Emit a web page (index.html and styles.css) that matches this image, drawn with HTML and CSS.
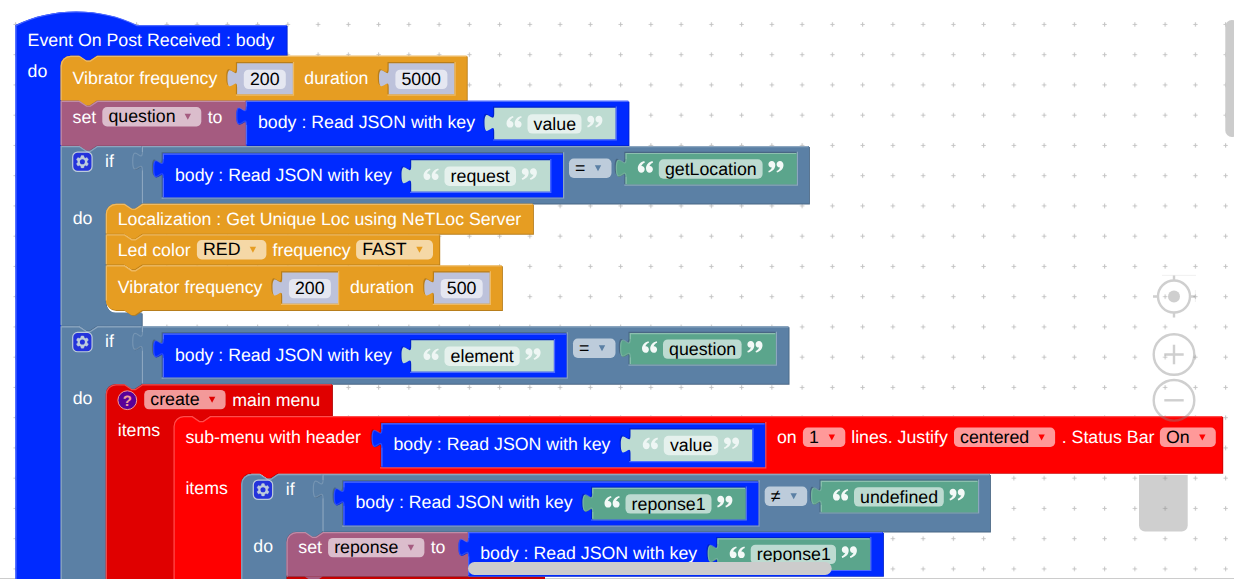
FILE: index.html
```html
<!DOCTYPE html>
<html lang="en">
<head>
<meta charset="utf-8">
<title>Block workspace</title>
<link rel="stylesheet" href="styles.css">
</head>
<body>
<main class="workspace">
  <svg class="canvas" width="1234" height="579" viewBox="0 0 1234 579">
    <defs>
      <pattern id="grid" width="30.25" height="30.25" x="0.45" y="9.3" patternUnits="userSpaceOnUse">
        <path class="grid-mark" d="M13.1 15.1h4.2M15.2 13v4.2"/>
      </pattern>
      <g id="quote">
        <path d="M6.3 0.3C2.400 1.2 -0.200 4.2 -0.200 7.700c0 2.500 1.500 4.200 3.500 4.200 2 0 3.400-1.500 3.400-3.400 0-1.900-1.300-3.200-3-3.200-.2 0-.4 0-.5.1.5-1.600 1.700-2.800 3.600-3.500z"/>
        <path d="M14.500 0.3C10.600 1.2 8 4.200 8 7.700c0 2.500 1.500 4.200 3.500 4.200 2 0 3.400-1.500 3.400-3.400 0-1.900-1.300-3.200-3-3.200-.2 0-.4 0-.5.1.5-1.600 1.700-2.800 3.600-3.500z"/>
      </g>
      <g id="gear">
        <rect class="icon-shape" width="16" height="16" rx="4" ry="4"/>
        <path class="icon-symbol" d="m4.203,7.296 0,1.368 -0.92,0.677 -0.11,0.41 0.9,1.559 0.41,0.11 1.043,-0.457 1.187,0.683 0.127,1.134 0.3,0.3 1.8,0 0.3,-0.299 0.127,-1.138 1.185,-0.682 1.046,0.458 0.409,-0.11 0.9,-1.559 -0.11,-0.41 -0.92,-0.677 0,-1.366 0.92,-0.677 0.11,-0.41 -0.9,-1.559 -0.409,-0.109 -1.046,0.458 -1.185,-0.682 -0.127,-1.138 -0.3,-0.299 -1.8,0 -0.3,0.3 -0.126,1.135 -1.187,0.682 -1.043,-0.457 -0.41,0.11 -0.899,1.559 0.108,0.409z"/>
        <circle class="icon-hole" r="2.1" cx="8" cy="8"/>
      </g>
    </defs>
    <rect class="backdrop" width="1234" height="579"/>
    <rect fill="url(#grid)" width="1234" height="578"/>
    <path class="border-line" d="M0 578.5H1234"/>
    <g id="blocks" transform="translate(-0.5 -0.5)"></g>
    <g class="controls">
      <path d="M1139 475h48.700v50.500a6 6 0 0 1-6 6h-36.700a6 6 0 0 1-6-6z"/>
      <g class="control-lines">
        <circle cx="1174" cy="296.500" r="16"/>
        <path d="M1174 275.500v5M1174 312.500v5M1153 296.500h5M1190 296.500h5"/>
        <circle cx="1174" cy="354.500" r="20.300"/>
        <path d="M1164.300 354.500h19.400M1174 344.800v19.400"/>
        <circle cx="1174" cy="400.300" r="20.300"/>
        <path d="M1164.300 400.300h19.400"/>
      </g>
      <circle cx="1174" cy="296.500" r="6"/>
      <path class="hairline" d="M1162 275.400h34M1195.400 290v12"/>
    </g>
    <rect class="scrollbar" x="468" y="562" width="363.700" height="13" rx="6.500"/>
    <rect class="scrollbar" x="1225.300" y="20" width="13" height="117" rx="6.500"/>
  </svg>
</main>
<script src="workspace.js"></script>
</body>
</html>
```
FILE: styles.css
```css
body {
  margin: 0;
  background: #fff;
}
.workspace {
  display: flex;
  height: 581px;
  overflow: hidden;
}
.canvas {
  display: block;
  flex: none;
  font-family: "Liberation Sans", Arial, sans-serif;
  font-size: 17.75px;
}
.backdrop { fill: #fff; }
.grid-mark { stroke: #c4c4c4; stroke-width: 1.1; }
.border-line { stroke: #ccc; }
.canvas text { text-rendering: geometricPrecision; }
.label { fill: #fff; }
.value { fill: #000; }
.field { fill: #fff; fill-opacity: .6; }
.quotes { fill: #fff; fill-opacity: .93; }
.quotes.dim { fill-opacity: .75; }
.arrow { stroke: none; }
.edge { fill: none; stroke-width: 1.21; }
.edge.tab { opacity: .55; }
.icon { opacity: .6; }
.icon-shape { fill: #00f; stroke: #fff; stroke-width: 1; }
.icon-symbol { fill: #fff; stroke: #fff; stroke-width: .3; }
.icon-hole { fill: #00f; }
.icon-text { fill: #fff; font-size: 15px; font-weight: bold; text-anchor: middle; }
.controls { fill: #888; opacity: .4; }
.control-lines { fill: none; stroke: #888; stroke-width: 2.4; }
.hairline { fill: none; stroke: #888; stroke-width: .5; opacity: .6; }
.scrollbar { fill: #ccc; }
```
FILE: workspace.js
```js
const S = 1.21; // workspace zoom
const layer = document.getElementById('blocks');
const BLUE = '#002aff', ORANGE = '#e69d22', PURPLE = '#a55b80', LOGIC = '#5b80a5',
  GREEN = '#5ba58c', PALE = '#bddbd1', NUM = '#bdc2db', MENU = '#e00000', SUB = '#ff0000';

function blend(color, target, amount) {
  const channels = [1, 3, 5].map(i => parseInt(color.substr(i, 2), 16));
  return 'rgb(' + channels.map(v => Math.round(v + (target - v) * amount)).join(',') + ')';
}
const light = c => blend(c, 255, 0.3);
const dark = c => blend(c, 0, 0.2);

function add(tag, attrs, text) {
  const el = document.createElementNS('http://www.w3.org/2000/svg', tag);
  for (const k in attrs) el.setAttribute(k, attrs[k]);
  if (text !== undefined) el.textContent = text;
  layer.appendChild(el);
  return el;
}

const n = (...v) => v.map(k => k * S).join(' ');
const TAB_UP = `c${n(0, -10, -8, 8, -8, -7.5)}s${n(8, 2.5, 8, -7.5)}`;
const NOTCH = `l${n(6, 4)}l${n(3, 0)}l${n(6, -4)}`;
const NOTCH_BACK = `l${n(-6, 4)}l${n(-3, 0)}l${n(-6, -4)}`;
const R = 8 * S;

function topEdge(x, y, r, o) {
  if (o.hat) return `V${y}c${n(30, -15, 70, -15, 100, 0)}H${r}`;
  const corner = o.round ? `V${y + R}a${R} ${R} 0 0 1 ${R} ${-R}` : `V${y}`;
  return corner + (o.notch ? `H${x + 15 * S}${NOTCH}` : '') + `H${r}`;
}

/* o.arm = {x, y, b, r}: a statement opening below the first row */
function block(x, y, r, b, color, o = {}) {
  let d = o.last ? `M${x + R} ${b}a${R} ${R} 0 0 1 ${-R} ${-R}` : `M${x} ${b}`;
  if (o.tab) d += `V${y + 20 * S}${TAB_UP}`;
  d += topEdge(x, y, r, o);
  if (o.arm) {
    const a = o.arm;
    d += `V${a.y}H${a.x + 30 * S}${NOTCH_BACK}H${a.x + R}a${R} ${R} 0 0 0 ${-R} ${R}` +
      `V${a.b - R}a${R} ${R} 0 0 0 ${R} ${R}H${a.r}`;
  }
  d += `V${b}`;
  if (o.under) d += `H${x + 30 * S}${NOTCH_BACK}`;
  d += 'Z';
  if (!o.shadow) add('path', { d, fill: dark(color), transform: 'translate(.9 .9)' });
  add('path', { d, fill: color });
  if (o.shadow) return;
  let e = `M${x + .6} ${o.last ? b - R : b - .6}`;
  if (o.tab) {
    add('path', { class: 'edge tab', d: `M${x + .6} ${y + 20 * S}${TAB_UP}`, stroke: light(color) });
    e += `V${y + 20 * S}M${x + .6} ${y + 5 * S}`;
  }
  e += o.hat ? `V${y + .6}c${n(30, -15, 70, -15, 100, 0)}H${r - .6}` : topEdge(x + .6, y + .6, r - .6, o);
  add('path', { class: 'edge', d: e, stroke: light(color) });
}

/* a value block sitting in an inline socket of a parent block */
function socket(x, y, r, b, color, parent, o = {}) {
  const hx = x - 1.2, hy = y - 1.2;
  add('path', { d: `M${hx} ${b}V${hy + 20 * S}${TAB_UP}V${hy}H${r}V${b}Z`, fill: dark(parent) });
  block(x, y, r, b, color, { tab: true, ...o });
  add('path', { class: 'edge', d: `M${r + .6} ${hy}V${b + .6}H${hx}`, stroke: light(parent) });
}

const label = (x, y, t) => add('text', { class: 'label', x, y: y + .3 }, t);
function field(x, r, y, t, arrowColor) {
  add('rect', { class: 'field', x, y: y + .2, width: r - x + .3, height: 19.4, rx: 4.8 });
  add('text', { class: 'value', x: x + 6.1, y: y + 15.500 }, t);
  if (arrowColor) {
    add('path', { class: 'arrow', fill: arrowColor, d: `M${r - 16.400} ${y + 7}h6.400l-3.200 6z` });
  }
}
function quotes(x, x2, y, dim) {
  const cls = dim ? 'quotes dim' : 'quotes';
  add('use', { class: cls, href: '#quote', transform: `translate(${x} ${y})` });
  add('use', { class: cls, href: '#quote', transform: `translate(${x2 + 14.900} ${y + 12}) rotate(180)` });
}
function number(x, r, y, t, parent) {
  socket(x, y, r, y + 31.400, NUM, parent, { shadow: true });
  field(x + 6.700, r - 7.400, y + 6.300, t);
}
function string(x, r, y, t, parent, dim) {
  socket(x, y, r, y + 31.600, dim ? PALE : GREEN, parent, { shadow: dim });
  quotes(x + 12.500, r - 28.400, y + 7.900, dim);
  field(x + 33.300, r - 34.500, y + 6.200, t);
}
function readJson(x, r, y, keyX, key, dim) {
  label(x + 12.1, y + 27.300, 'body : Read JSON with key');
  string(keyX, r - 12.800, y + 7, key, BLUE, dim);
}
function gear(x, y) {
  add('use', { class: 'icon', href: '#gear', transform: `translate(${x} ${y}) scale(${S})` });
}

// Event hat block
block(15.900, 25.500, 287.200, 640, BLUE, { hat: true, arm: { x: 61.1, y: 56, b: 620, r: 160 } });
label(28.1, 45.900, 'Event On Post Received : body');
label(28.1, 76.700, 'do');

// Vibrator
block(61.1, 56.200, 467.300, 101, ORANGE, { round: true, notch: true, under: true });
label(73.1, 84, 'Vibrator frequency');
number(237.600, 293.400, 63.700, '200', ORANGE);
label(304.800, 84, 'duration');
number(389.200, 455, 63.700, '5000', ORANGE);

// set question
block(61.1, 101.300, 246.500, 146, PURPLE, { notch: true, under: true });
label(73.1, 123, 'set');
field(102.800, 201.500, 107.300, 'question', PURPLE);
label(208.200, 123, 'to');
block(246.400, 101.300, 629, 145.700, BLUE, { tab: true });
readJson(246.400, 629, 101.300, 494.700, 'value', true);

// an "if" block with its comparison row
function ifBlock(x, y, b, o) {
  block(x, y, x + 81.200, b, LOGIC, { notch: true, round: o.round, under: true,
    arm: { x: x + 45.200, y: y + 57.700, b: o.armBottom, r: x + 81.200 } });
  gear(x + 12.1, y + 6.100);
  label(x + 44.500, y + 20.700, 'if');
  label(x + 12.1, y + 77.700, 'do');
  block(x + 81.200, y, o.right, y + 57.500, LOGIC, { tab: true });
}
function compare(x, y, r, op, opX) {
  socket(x, y, r, y + 44, BLUE, LOGIC);
  field(opX + .300, opX + 42.500, y + 4.800, op, LOGIC);
}

ifBlock(61.1, 146.500, 326.200, { armBottom: 313, right: 809.500 });
compare(163.300, 154, 563.500, '=', 569.200);
readJson(163.300, 563.500, 153.700, 411.700, 'request', true);
string(626, 797.300, 153.400, 'getLocation', LOGIC);

block(106.300, 204.300, 533.500, 234.300, ORANGE, { round: true, notch: true, under: true });
label(118.2, 225, 'Localization : Get Unique Loc using NeTLoc Server');
block(106.300, 234.900, 439.800, 265, ORANGE, { notch: true, under: true });
label(118.2, 255.900, 'Led color');
field(197.400, 266.600, 240.300, 'RED', ORANGE);
label(273.100, 255.900, 'frequency');
field(356.600, 433.200, 240.300, 'FAST', ORANGE);
block(106.300, 265.900, 502.500, 310.600, ORANGE, { notch: true, under: true, last: true });
label(118.2, 293, 'Vibrator frequency');
number(282.700, 338.500, 272.900, '200', ORANGE);
label(350.400, 293, 'duration');
number(434.500, 490.300, 272.900, '500', ORANGE);

ifBlock(61.1, 326.800, 660, { armBottom: 650, right: 789.100 });
compare(163.300, 334, 567.200, '=', 573.200);
readJson(163.300, 567.200, 333.700, 411.700, 'element', true);
string(630.200, 776.300, 333.500, 'question', LOGIC);

// create main menu
block(106.300, 384.700, 332.500, 660, MENU, { round: true, notch: true, arm: { x: 174, y: 416.300, b: 650, r: 200 } });
const help = add('g', { class: 'icon' });
help.innerHTML = '<circle class="icon-shape" cx="127.800" cy="400.700" r="9.400"/><text class="icon-text" x="127.800" y="406">?</text>';
field(144.700, 225.800, 390.200, 'create', MENU);
label(232.800, 405.700, 'main menu');
label(118.2, 435.700, 'items');

// sub-menu
block(174, 416.600, 1222.800, 660, SUB, { round: true, notch: true, arm: { x: 241.700, y: 473.400, b: 650, r: 260 } });
label(185.900, 443, 'sub-menu with header');
socket(381.800, 423.700, 765.700, 467.700, BLUE, SUB);
readJson(381.800, 765.700, 422.900, 631, 'value', true);
label(777.400, 443, 'on');
field(803.400, 845.500, 427.900, '1', SUB);
label(851.700, 443, 'lines. Justify');
field(954.500, 1055.300, 427.900, 'centered', SUB);
label(1062.200, 443, '. Status Bar');
field(1160.400, 1216, 427.900, 'On', SUB);
label(185.900, 493.700, 'items');

ifBlock(241.700, 474.500, 660, { round: true, armBottom: 650, right: 990.500 });
compare(343.900, 482, 759, '≠', 764.900);
readJson(343.900, 759, 481.300, 592.700, 'reponse1', false);
string(821.200, 978.500, 481.300, 'undefined', LOGIC);

// set reponse
block(287, 532.500, 468.500, 576.500, PURPLE, { round: true, notch: true });
add('path', { fill: '#c60000', d: 'M287 577.2H545.500V579.5H287z' });
add('path', { fill: PURPLE, d: `M${287 + 15 * S} 577${NOTCH}z` });
label(298.800, 552.800, 'set');
field(328.600, 424.600, 538.200, 'reponse', PURPLE);
label(431.200, 552.800, 'to');
block(468.600, 532.500, 883.500, 576.400, BLUE, { tab: true });
readJson(468.600, 883.500, 531.800, 717.900, 'reponse1', false);
```
